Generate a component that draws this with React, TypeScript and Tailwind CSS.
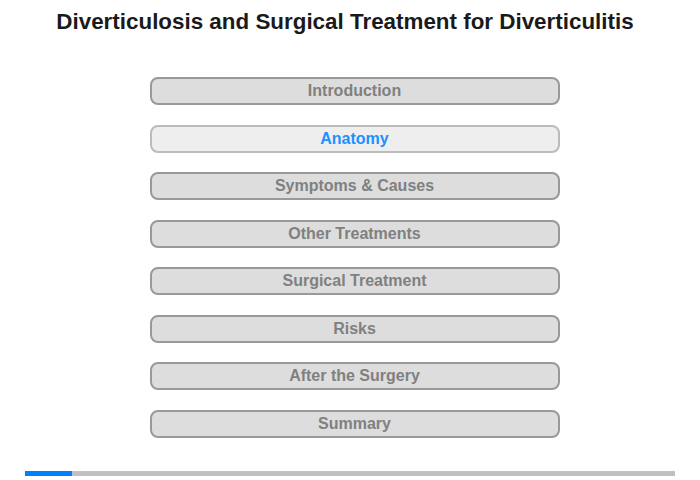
const topics = [
  'Introduction',
  'Anatomy',
  'Symptoms & Causes',
  'Other Treatments',
  'Surgical Treatment',
  'Risks',
  'After the Surgery',
  'Summary',
];

const current = 1;

export default function App() {
  return (
    <div className="w-[700px] h-[480px] bg-white flex flex-col items-center font-['Liberation_Sans',Arial,sans-serif]">
      <h1 className="mt-[7px] mr-[10px] h-[30px] leading-[30px] text-[22.4px] font-bold text-[#1a1a1a]">
        Diverticulosis and Surgical Treatment for Diverticulitis
      </h1>

      {/* chapter menu */}
      <div className="mt-[40px] ml-[9px] flex flex-col gap-[19.5px]">
        {topics.map((topic, i) => (
          <button
            key={topic}
            className={
              i === current
                ? 'w-[410px] h-[28px] rounded-[8px] border-2 border-[#bbbbbb] bg-[#eeeeee] text-[16px] font-bold leading-[24px] text-[#1e90ff]'
                : 'w-[410px] h-[28px] rounded-[8px] border-2 border-[#999999] bg-[#dddddd] text-[16px] font-bold leading-[24px] text-[#808080]'
            }
          >
            {topic}
          </button>
        ))}
      </div>

      {/* progress */}
      <div className="mt-[33px] w-[650px] h-[5px] bg-[#c0c0c0] flex">
        <div className="w-[47px] h-full bg-[#0080ff]" />
      </div>
    </div>
  );
}
